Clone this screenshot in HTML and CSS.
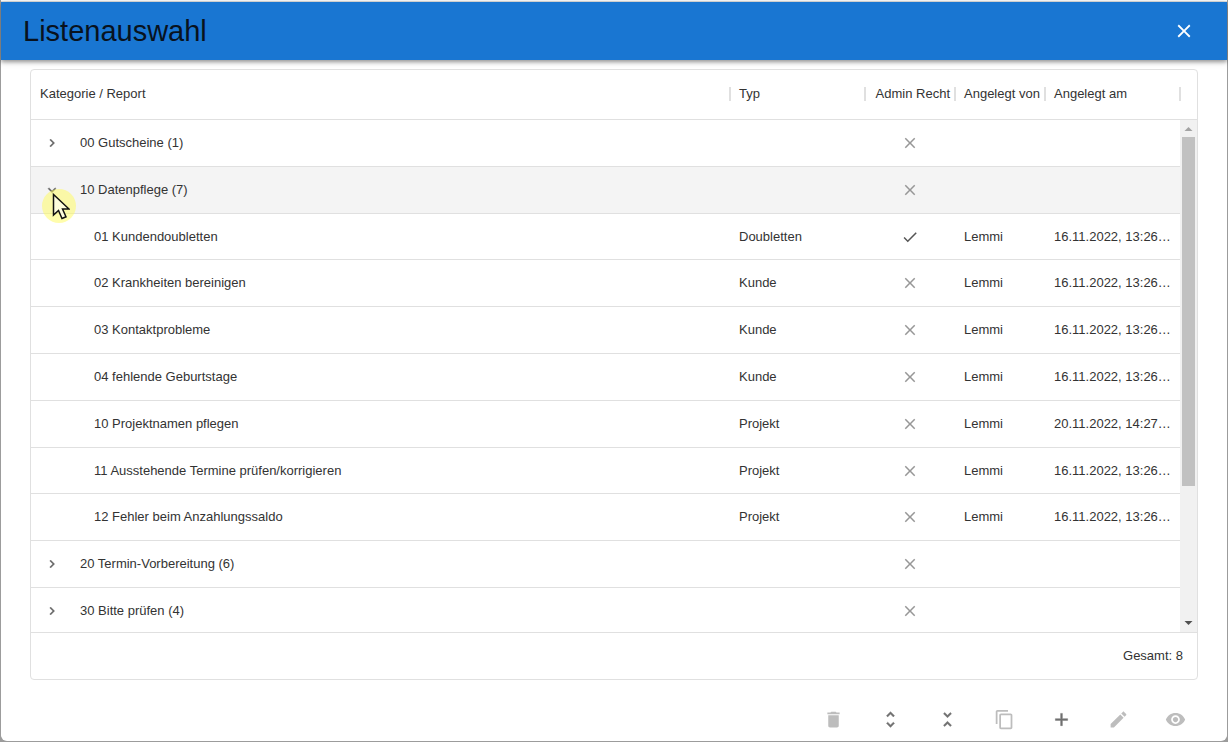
FILE: index.html
```html
<!DOCTYPE html>
<html lang="de">
<head>
<meta charset="utf-8">
<title>Listenauswahl</title>
<link rel="stylesheet" href="styles.css">
</head>
<body>
<svg class="sprite" aria-hidden="true">
  <symbol id="close" viewBox="0 0 24 24"><path d="M19 6.41 17.59 5 12 10.59 6.41 5 5 6.41 10.59 12 5 17.59 6.41 19 12 13.41 17.59 19 19 17.59 13.41 12z"/></symbol>
  <symbol id="check" viewBox="0 0 24 24"><path d="M9 16.17 4.83 12l-1.42 1.41L9 19 21 7l-1.41-1.41z"/></symbol>
  <symbol id="right" viewBox="0 0 24 24"><path d="M10 6 8.59 7.41 13.17 12l-4.58 4.59L10 18l6-6z"/></symbol>
  <symbol id="down" viewBox="0 0 24 24"><path d="M16.59 8.59 12 13.17 7.41 8.59 6 10l6 6 6-6z"/></symbol>
  <symbol id="trash" viewBox="0 0 24 24"><path d="M6 19c0 1.100.9 2 2 2h8c1.100 0 2-.9 2-2V7H6v12zM19 4h-3.500l-1-1h-5l-1 1H5v2h14V4z"/></symbol>
  <symbol id="expand" viewBox="0 0 24 24"><path d="M12 5.830 15.170 9l1.410-1.410L12 3 7.410 7.590 8.830 9 12 5.830zm0 12.340L8.830 15l-1.410 1.410L12 21l4.590-4.590L15.170 15 12 18.170z"/></symbol>
  <symbol id="collapse" viewBox="0 0 24 24"><path d="M7.410 18.590 8.830 20 12 16.830 15.170 20l1.410-1.410L12 14l-4.590 4.590zm9.180-13.180L15.170 4 12 7.170 8.830 4 7.410 5.410 12 10l4.590-4.590z"/></symbol>
  <symbol id="copy" viewBox="0 0 24 24"><path d="M16 1H4c-1.100 0-2 .9-2 2v14h2V3h12V1zm3 4H8c-1.100 0-2 .9-2 2v14c0 1.100.9 2 2 2h11c1.100 0 2-.9 2-2V7c0-1.100-.9-2-2-2zm0 16H8V7h11v14z"/></symbol>
  <symbol id="plus" viewBox="0 0 24 24"><path d="M19 13h-6v6h-2v-6H5v-2h6V5h2v6h6v2z"/></symbol>
  <symbol id="pencil" viewBox="0 0 24 24"><path d="M3 17.250V21h3.750L17.810 9.940l-3.750-3.750L3 17.250zM20.710 7.040c.39-.39.39-1.020 0-1.410l-2.340-2.340c-.39-.39-1.020-.39-1.410 0l-1.830 1.830 3.750 3.750 1.830-1.830z"/></symbol>
  <symbol id="eye" viewBox="0 0 24 24"><path d="M12 4.500C7 4.500 2.730 7.610 1 12c1.730 4.390 6 7.500 11 7.500s9.270-3.110 11-7.500c-1.730-4.390-6-7.500-11-7.500zM12 17c-2.760 0-5-2.240-5-5s2.240-5 5-5 5 2.240 5 5-2.240 5-5 5zm0-8c-1.660 0-3 1.340-3 3s1.340 3 3 3 3-1.340 3-3-1.340-3-3-3z"/></symbol>
</svg>

<main class="dialog">
  <header class="titlebar">
    <h1 class="title">Listenauswahl</h1>
    <button class="close" aria-label="Schließen"><svg class="icon-close"><use href="#close"/></svg></button>
  </header>

  <section class="panel">
    <div class="listing">
      <table class="reports">
        <thead class="head">
          <tr class="row">
            <th class="cell">Kategorie / Report</th>
            <th class="cell">Typ</th>
            <th class="cell mid">Admin Recht</th>
            <th class="cell">Angelegt von</th>
            <th class="cell">Angelegt am</th>
          </tr>
        </thead>
        <tbody class="body">
          <tr class="row"><td class="cell group"><button class="toggle" aria-label="Aufklappen"><svg class="chevron"><use href="#right"/></svg></button>00 Gutscheine (1)</td><td class="cell"></td><td class="cell mid"><svg class="mark no"><use href="#close"/></svg></td><td class="cell"></td><td class="cell"></td></tr>
          <tr class="row hovered"><td class="cell group"><button class="toggle" aria-label="Zuklappen"><svg class="chevron"><use href="#down"/></svg>
            <span class="pointer"><svg class="arrow" viewBox="0 0 18 27"><path d="M1.500 1.500V22l5-4.500 3.500 8 4-1.700-3.500-7.800H17z"/></svg></span></button>10 Datenpflege (7)</td><td class="cell"></td><td class="cell mid"><svg class="mark no"><use href="#close"/></svg></td><td class="cell"></td><td class="cell"></td></tr>
          <tr class="row"><td class="cell child">01 Kundendoubletten</td><td class="cell">Doubletten</td><td class="cell mid"><svg class="mark yes"><use href="#check"/></svg></td><td class="cell">Lemmi</td><td class="cell">16.11.2022, 13:26:10</td></tr>
          <tr class="row"><td class="cell child">02 Krankheiten bereinigen</td><td class="cell">Kunde</td><td class="cell mid"><svg class="mark no"><use href="#close"/></svg></td><td class="cell">Lemmi</td><td class="cell">16.11.2022, 13:26:10</td></tr>
          <tr class="row"><td class="cell child">03 Kontaktprobleme</td><td class="cell">Kunde</td><td class="cell mid"><svg class="mark no"><use href="#close"/></svg></td><td class="cell">Lemmi</td><td class="cell">16.11.2022, 13:26:10</td></tr>
          <tr class="row"><td class="cell child">04 fehlende Geburtstage</td><td class="cell">Kunde</td><td class="cell mid"><svg class="mark no"><use href="#close"/></svg></td><td class="cell">Lemmi</td><td class="cell">16.11.2022, 13:26:10</td></tr>
          <tr class="row"><td class="cell child">10 Projektnamen pflegen</td><td class="cell">Projekt</td><td class="cell mid"><svg class="mark no"><use href="#close"/></svg></td><td class="cell">Lemmi</td><td class="cell">20.11.2022, 14:27:10</td></tr>
          <tr class="row"><td class="cell child">11 Ausstehende Termine prüfen/korrigieren</td><td class="cell">Projekt</td><td class="cell mid"><svg class="mark no"><use href="#close"/></svg></td><td class="cell">Lemmi</td><td class="cell">16.11.2022, 13:26:10</td></tr>
          <tr class="row"><td class="cell child">12 Fehler beim Anzahlungssaldo</td><td class="cell">Projekt</td><td class="cell mid"><svg class="mark no"><use href="#close"/></svg></td><td class="cell">Lemmi</td><td class="cell">16.11.2022, 13:26:10</td></tr>
          <tr class="row"><td class="cell group"><button class="toggle" aria-label="Aufklappen"><svg class="chevron"><use href="#right"/></svg></button>20 Termin-Vorbereitung (6)</td><td class="cell"></td><td class="cell mid"><svg class="mark no"><use href="#close"/></svg></td><td class="cell"></td><td class="cell"></td></tr>
          <tr class="row"><td class="cell group"><button class="toggle" aria-label="Aufklappen"><svg class="chevron"><use href="#right"/></svg></button>30 Bitte prüfen (4)</td><td class="cell"></td><td class="cell mid"><svg class="mark no"><use href="#close"/></svg></td><td class="cell"></td><td class="cell"></td></tr>
        </tbody>
      </table>
      <div class="side">
        <div class="side-head"></div>
        <div class="scrollbar">
          <svg class="step up" viewBox="0 0 17 17"><path d="M4.500 11 8.500 7l4 4z"/></svg>
          <div class="track"><div class="thumb"></div></div>
          <svg class="step" viewBox="0 0 17 17"><path d="M4.500 6l4 4 4-4z"/></svg>
        </div>
      </div>
    </div>
    <footer class="total">Gesamt: 8</footer>
  </section>

  <nav class="actions">
    <button class="action" disabled aria-label="Löschen"><svg class="icon"><use href="#trash"/></svg></button>
    <button class="action" aria-label="Alle aufklappen"><svg class="icon bold"><use href="#expand"/></svg></button>
    <button class="action" aria-label="Alle zuklappen"><svg class="icon bold"><use href="#collapse"/></svg></button>
    <button class="action" disabled aria-label="Kopieren"><svg class="icon"><use href="#copy"/></svg></button>
    <button class="action" aria-label="Neu"><svg class="icon bold"><use href="#plus"/></svg></button>
    <button class="action" disabled aria-label="Bearbeiten"><svg class="icon"><use href="#pencil"/></svg></button>
    <button class="action" disabled aria-label="Anzeigen"><svg class="icon"><use href="#eye"/></svg></button>
  </nav>
</main>
</body>
</html>
```

FILE: styles.css
```css
* { box-sizing: border-box; }

body {
  margin: 0;
  height: 100vh;
  padding: 1px;
  background: #9c9c9c;
  font: 13px/20px "Liberation Sans", Arial, sans-serif;
  color: #333;
}

button {
  display: flex;
  align-items: center;
  justify-content: center;
  padding: 0;
  border: 0;
  background: none;
  font: inherit;
  color: inherit;
}

svg { display: block; fill: currentColor; }

.sprite { position: absolute; width: 0; height: 0; }

.dialog {
  display: flex;
  flex-direction: column;
  height: 100%;
  border-top: 1px solid #e3e3e3;
  border-radius: 0 0 6px 6px;
  background: #fff;
  box-shadow: 0 -1px 0 #fff;
}

.titlebar {
  display: flex;
  align-items: center;
  justify-content: space-between;
  height: 58px;
  flex: none;
  padding: 0 24px 0 22px;
  background: #1976d2;
  box-shadow: 0 2px 4px rgba(0, 0, 0, .35), 0 1px 8px rgba(0, 0, 0, .15);
}

.title {
  margin: 0;
  font-size: 29px;
  line-height: 40px;
  font-weight: 400;
  color: #08121e;
}

.close { width: 38px; height: 38px; color: #fff; }
.icon-close { width: 22px; height: 22px; }

.panel {
  display: flex;
  flex-direction: column;
  flex: 1;
  min-height: 0;
  margin: 9px 29px 0;
  border: 1px solid #e0e0e0;
  border-radius: 4px;
}

.listing { display: flex; flex: 1; min-height: 0; }

.reports {
  display: flex;
  flex-direction: column;
  flex: 1;
  min-width: 0;
}

.head, .body { display: block; }
.body { flex: 1; min-height: 0; overflow: hidden; }

.row {
  display: grid;
  grid-template-columns: 1fr 135px 90px 90px 135px;
  align-items: center;
  height: 47px;
  border-bottom: 1px solid #e0e0e0;
}
.body .row:nth-child(5n + 3) { height: 46px; }
.head .row { height: 50px; padding-bottom: 1px; }

.hovered { background: #f4f4f4; }

.cell {
  padding: 0 9px;
  overflow: hidden;
  text-align: left;
  text-overflow: ellipsis;
  white-space: nowrap;
  font-weight: 400;
}
.head .cell {
  height: 14px;
  line-height: 14px;
  overflow: visible;
  box-shadow: 1px 0 0 #e0e0e0, inset -1px 0 0 #e0e0e0;
}
.mid { display: flex; justify-content: center; }
.head .mid { justify-content: flex-end; padding: 0 5px 0 0; }
.group { display: flex; align-items: center; gap: 16px; overflow: visible; }
.child { padding-left: 63px; }

.toggle { position: relative; width: 24px; height: 24px; color: #666; }
.chevron { width: 16px; height: 16px; stroke: currentColor; stroke-width: .5; }

.mark { width: 18px; height: 18px; }
.no { color: #979797; }
.yes { color: #555; }

.pointer {
  position: absolute;
  left: 2px;
  top: 11px;
  width: 34px;
  height: 34px;
  border-radius: 50%;
  background: rgba(255, 252, 90, .5);
}
.arrow {
  width: 18px;
  height: 27px;
  margin: 4px 0 0 10px;
  fill: #fff;
  fill-opacity: .6;
  stroke: #111;
  stroke-width: 1.5;
}

.side { display: flex; flex-direction: column; width: 17px; }
.side-head { height: 50px; border-bottom: 1px solid #e0e0e0; }
.scrollbar { display: flex; flex-direction: column; flex: 1; background: #f1f1f1; }
.step { width: 17px; height: 17px; color: #505050; }
.up { color: #a3a3a3; }
.track { flex: 1; padding: 0 2px; }
.thumb { height: 73%; background: #c1c1c1; }

.total {
  height: 47px;
  padding: 13px 14px;
  border-top: 1px solid #e0e0e0;
  text-align: right;
}

.actions {
  display: flex;
  align-items: center;
  justify-content: flex-end;
  gap: 20px;
  height: 61px;
  padding: 18px 33px 0 0;
  flex: none;
}
.action { width: 37px; height: 37px; color: #707070; }
.action:disabled { color: #bdbdbd; }
.icon { width: 21px; height: 21px; }
.bold { stroke: currentColor; stroke-width: .5; }
```
